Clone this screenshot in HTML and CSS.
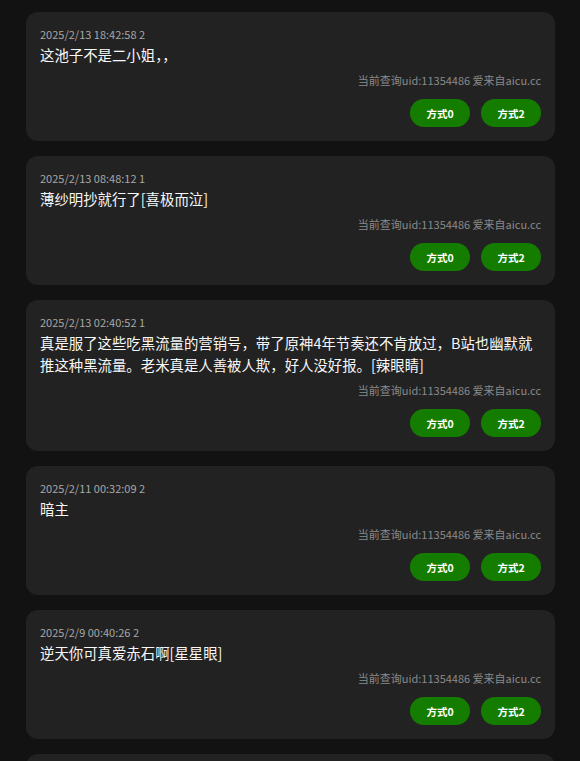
FILE: index.html
```html
<!DOCTYPE html>
<html lang="zh-CN">
<head>
  <meta charset="UTF-8">
  <meta name="viewport" content="width=device-width, initial-scale=1.0">
  <title>评论列表</title>
  <link rel="stylesheet" href="styles.css">
</head>
<body>
  <div class="list">
    <div class="card">
      <div class="meta">2025/2/13 18:42:58 2</div>
      <div class="content">这池子不是二小姐，，</div>
      <div class="source">当前查询uid:11354486 爱来自aicu.cc</div>
      <div class="actions">
        <button class="btn">方式0</button>
        <button class="btn">方式2</button>
      </div>
    </div>

    <div class="card">
      <div class="meta">2025/2/13 08:48:12 1</div>
      <div class="content">薄纱明抄就行了[喜极而泣]</div>
      <div class="source">当前查询uid:11354486 爱来自aicu.cc</div>
      <div class="actions">
        <button class="btn">方式0</button>
        <button class="btn">方式2</button>
      </div>
    </div>

    <div class="card">
      <div class="meta">2025/2/13 02:40:52 1</div>
      <div class="content">真是服了这些吃黑流量的营销号，带了原神4年节奏还不肯放过，B站也幽默就推这种黑流量。老米真是人善被人欺，好人没好报。[辣眼睛]</div>
      <div class="source">当前查询uid:11354486 爱来自aicu.cc</div>
      <div class="actions">
        <button class="btn">方式0</button>
        <button class="btn">方式2</button>
      </div>
    </div>

    <div class="card">
      <div class="meta">2025/2/11 00:32:09 2</div>
      <div class="content">暗主</div>
      <div class="source">当前查询uid:11354486 爱来自aicu.cc</div>
      <div class="actions">
        <button class="btn">方式0</button>
        <button class="btn">方式2</button>
      </div>
    </div>

    <div class="card">
      <div class="meta">2025/2/9 00:40:26 2</div>
      <div class="content">逆天你可真爱赤石啊[星星眼]</div>
      <div class="source">当前查询uid:11354486 爱来自aicu.cc</div>
      <div class="actions">
        <button class="btn">方式0</button>
        <button class="btn">方式2</button>
      </div>
    </div>

    <div class="card">
      <div class="meta">2025/2/8 21:15:03 1</div>
      <div class="content">哈哈</div>
      <div class="source">当前查询uid:11354486 爱来自aicu.cc</div>
      <div class="actions">
        <button class="btn">方式0</button>
        <button class="btn">方式2</button>
      </div>
    </div>
  </div>
</body>
</html>
```

FILE: styles.css
```css
:root {
  --page-bg: #121212;
  --card-bg: #222222;
  --text-color: #f7f7f7;
  --muted-color: #a8a8a8;
  --dim-color: #8a8a8a;
  --button-color: #147d00;
}

html,
body {
  margin: 0;
  padding: 0;
  background-color: var(--page-bg);
  color: var(--text-color);
  font-family: "Noto Sans CJK SC", "Noto Sans", sans-serif;
}

.list {
  display: flex;
  flex-direction: column;
  gap: 15px;
  padding: 12px 25px 12px 26px;
}

.card {
  background-color: var(--card-bg);
  border-radius: 12px;
  padding: 12px 14px 14px;
}

.meta {
  font-size: 11px;
  line-height: 20px;
  color: var(--muted-color);
}

.content {
  font-size: 14.4px;
  line-height: 22px;
  color: var(--text-color);
}

.source {
  font-size: 11px;
  line-height: 20px;
  margin-top: 4px;
  text-align: right;
  color: var(--dim-color);
}

.actions {
  display: flex;
  justify-content: flex-end;
  gap: 11px;
  margin-top: 9px;
}

.btn {
  width: 60px;
  height: 28px;
  border: none;
  border-radius: 14px;
  background-color: var(--button-color);
  color: #ffffff;
  font-family: inherit;
  font-size: 10.5px;
  font-weight: bold;
  padding: 0;
  cursor: pointer;
}
```
